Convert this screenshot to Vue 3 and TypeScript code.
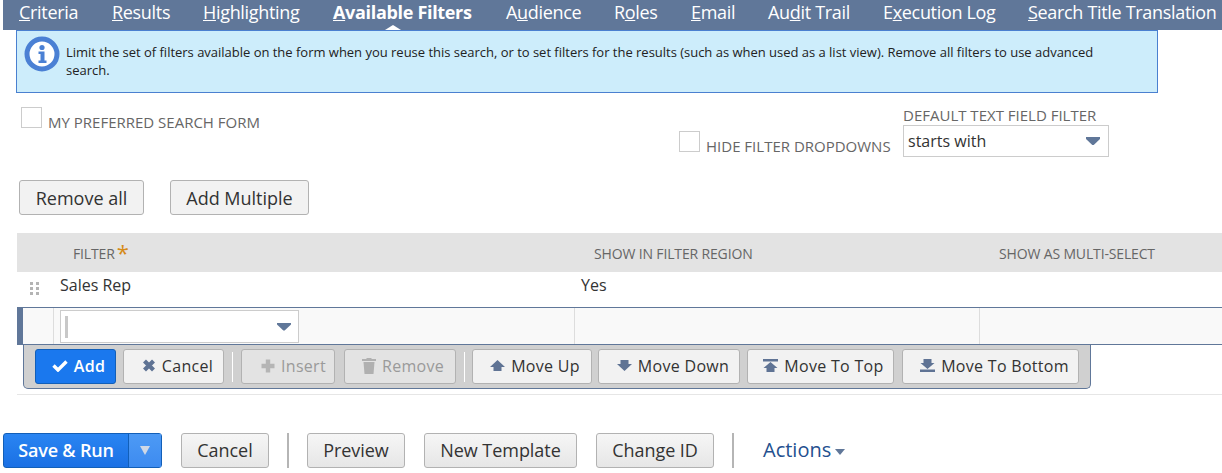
<script setup lang="ts">
const tabs = [
  { pre: '', key: 'C', post: 'riteria', w: 93 },
  { pre: '', key: 'R', post: 'esults', w: 91 },
  { pre: '', key: 'H', post: 'ighlighting', w: 130 },
  { pre: '', key: 'A', post: 'vailable Filters', w: 173, active: true },
  { pre: 'A', key: 'u', post: 'dience', w: 108 },
  { pre: 'R', key: 'o', post: 'les', w: 77 },
  { pre: '', key: 'E', post: 'mail', w: 77 },
  { pre: 'Au', key: 'd', post: 'it Trail', w: 115 },
  { pre: 'E', key: 'x', post: 'ecution Log', w: 145 },
  { pre: '', key: 'S', post: 'earch Title Translation', w: 195 },
]
</script>

<template>
  <div class="page">
    <nav class="tabs">
      <a v-for="t in tabs" :key="t.key + t.post" class="tab" :class="{ active: t.active }" :style="{ width: t.w + 'px' }">{{ t.pre }}<u>{{ t.key }}</u>{{ t.post }}</a>
    </nav>

    <div class="banner">
      <svg class="info" width="36" height="36" viewBox="0 0 36 36">
        <circle cx="18" cy="18" r="15" fill="#fff" stroke="#4a80d4" stroke-width="5" />
        <circle cx="18" cy="11.5" r="2.6" fill="#4a80d4" />
        <path d="M14.5 15.5h6v9h2v2.5h-8v-2.5h2v-6.500h-2z" fill="#4a80d4" />
      </svg>
      <p>Limit the set of filters available on the form when you reuse this search, or to set filters for the results (such as when used as a list view). Remove all filters to use advanced search.</p>
    </div>

    <div class="options">
      <label class="check first"><span class="box"></span><span class="lbl">MY PREFERRED SEARCH FORM</span></label>
      <label class="check second"><span class="box"></span><span class="lbl">HIDE FILTER DROPDOWNS</span></label>
      <div class="deflt">
        <div class="lbl">DEFAULT TEXT FIELD FILTER</div>
        <div class="select"><span>starts with</span><i class="caret"></i></div>
      </div>
    </div>

    <div class="top-btns">
      <button class="btn big w-remove">Remove all</button>
      <button class="btn big w-multiple">Add Multiple</button>
    </div>

    <div class="grid">
      <div class="row head">
        <div class="c0"></div>
        <div class="c1 th">FILTER<span class="star">*</span></div>
        <div class="c2 th">SHOW IN FILTER REGION</div>
        <div class="c3 th">SHOW AS MULTI-SELECT</div>
      </div>
      <div class="row data">
        <div class="c0">
          <svg width="10" height="14" viewBox="0 0 10 14" fill="#b4b4b4"><rect x="0" y="0" width="3" height="3" /><rect x="6" y="0" width="3" height="3" /><rect x="0" y="5" width="3" height="3" /><rect x="6" y="5" width="3" height="3" /><rect x="0" y="10" width="3" height="3" /><rect x="6" y="10" width="3" height="3" /></svg>
        </div>
        <div class="c1 td">Sales Rep</div>
        <div class="c2 td">Yes</div>
        <div class="c3"></div>
      </div>
      <div class="row edit">
        <div class="c0 cell"></div>
        <div class="c1 cell">
          <div class="combo"><span class="cursor"></span><i class="caret"></i></div>
        </div>
        <div class="c2 cell"></div>
        <div class="c3"></div>
      </div>
      <div class="toolbar">
        <button class="btn tool primary w-add">
          <svg width="16" height="13" viewBox="0 0 16 13"><path d="M1.500 6.500l4.500 4.500L14.500 2.500" fill="none" stroke="#fff" stroke-width="3.400" /></svg>Add
        </button>
        <button class="btn tool w-cancel">
          <svg width="14" height="13" viewBox="0 0 14 13"><path d="M2.500 2l9 9M11.500 2l-9 9" stroke="#5f7394" stroke-width="4.200" /></svg>Cancel
        </button>
        <span class="sep"></span>
        <button class="btn tool off w-insert">
          <svg width="14" height="14" viewBox="0 0 14 14"><path d="M7 0.500v13M0.500 7h13" stroke="#b5b5b5" stroke-width="4.400" /></svg>Insert
        </button>
        <button class="btn tool off w-remove-row">
          <svg width="14" height="16" viewBox="0 0 14 16" fill="#b0b0b0"><rect x="0" y="1" width="14" height="2" /><rect x="4.500" y="0" width="5" height="2" /><path d="M1.500 4h11l-1 12h-9z" /></svg>Remove
        </button>
        <span class="sep"></span>
        <button class="btn tool w-up">
          <svg width="15" height="11" viewBox="0 0 15 11" fill="#5f7394"><path d="M7.500 0L15 7h-3.500v4h-8V7H0z" /></svg>Move Up
        </button>
        <button class="btn tool w-down">
          <svg width="15" height="11" viewBox="0 0 15 11" fill="#5f7394"><path d="M3.500 0h8v4H15l-7.500 7L0 4h3.500z" /></svg>Move Down
        </button>
        <button class="btn tool w-top">
          <svg width="15" height="13" viewBox="0 0 15 13" fill="#5f7394"><rect x="0" y="0" width="15" height="2.500" /><path d="M7.500 3l7 6h-3v4h-8V9h-3z" /></svg>Move To Top
        </button>
        <button class="btn tool w-bottom">
          <svg width="15" height="13" viewBox="0 0 15 13" fill="#5f7394"><path d="M3.500 0h8v4h3l-7 6-7-6h3z" /><rect x="0" y="10.500" width="15" height="2.500" /></svg>Move To Bottom
        </button>
      </div>
    </div>

    <div class="bottom">
      <div class="split">
        <span class="split-main">Save &amp; Run</span>
        <span class="split-arrow"><i></i></span>
      </div>
      <button class="btn big grad w-c">Cancel</button>
      <span class="vsep"></span>
      <button class="btn big grad w-p">Preview</button>
      <button class="btn big grad w-n">New Template</button>
      <button class="btn big grad w-i">Change ID</button>
      <span class="vsep"></span>
      <a class="actions">Actions<i></i></a>
    </div>
  </div>
</template>

<style scoped>
.page {
  width: 1222px;
  height: 473px;
  overflow: hidden;
  font-family: "Open Sans", "Noto Sans", sans-serif;
  color: #333;
  background: #fff;
}
.tabs {
  display: flex;
  height: 30px;
  margin-left: 3px;
  padding-left: 16px;
  background: #607799;
  white-space: nowrap;
}
.tab {
  flex: none;
  position: relative;
  font-size: 18px;
  letter-spacing: -0.32px;
  line-height: 25px;
  color: #fff;
}
.tab.active {
  font-weight: 700;
}
.tab.active::after {
  content: "";
  position: absolute;
  left: 52px;
  bottom: 0;
  border: 8px solid transparent;
  border-top: 0;
  border-bottom: 5px solid #fff;
}
.banner {
  box-sizing: border-box;
  display: flex;
  width: 1142px;
  height: 63px;
  margin-left: 16px;
  padding: 5px 40px 0 7px;
  background: #cdedfb;
  border: 1px solid #4a80d0;
}
.info {
  flex: none;
}
.banner p {
  margin: 7px 0 0 6px;
  font-size: 13px;
  letter-spacing: -0.015px;
  line-height: 18px;
  color: #222;
}
.options {
  display: flex;
  height: 87px;
}
.check {
  display: flex;
  flex: none;
}
.first {
  width: 658px;
  margin-left: 21px;
  padding-top: 14px;
}
.second {
  width: 224px;
  padding-top: 38px;
}
.box {
  box-sizing: border-box;
  flex: none;
  width: 21px;
  height: 21px;
  border: 1px solid #ccc;
  background: #fff;
}
.lbl {
  font-size: 15px;
  line-height: 19px;
  color: #666;
  white-space: nowrap;
}
.check .lbl {
  margin: 6px 0 0 6px;
}
.deflt {
  padding-top: 13px;
}
.select {
  box-sizing: border-box;
  display: flex;
  align-items: center;
  justify-content: space-between;
  width: 206px;
  height: 32px;
  padding: 0 8px 0 4px;
  border: 1px solid #ccc;
  font-size: 16px;
}
.caret {
  display: block;
  width: 14px;
  height: 8px;
  background: #607799;
  clip-path: polygon(0 0, 100% 0, 100% 25%, 55% 100%, 45% 100%, 0 25%);
}
.top-btns {
  display: flex;
  gap: 26px;
  margin-left: 19px;
}
.btn {
  box-sizing: border-box;
  display: inline-flex;
  align-items: center;
  justify-content: center;
  flex: none;
  border: 1px solid #b2b2b2;
  border-radius: 3px;
  background: #f2f2f2;
  font-family: inherit;
  color: #333;
  white-space: nowrap;
}
.big {
  height: 35px;
  padding: 0;
  font-size: 18px;
  font-weight: 400;
}
.w-remove { width: 125px; }
.w-multiple { width: 139px; }
.grid {
  width: 1205px;
  margin: 18px 0 0 17px;
  padding-bottom: 5px;
  border-bottom: 1px solid #e6e6e6;
}
.row {
  display: flex;
}
.c0 {
  box-sizing: border-box;
  flex: none;
  width: 36px;
  display: flex;
  justify-content: center;
}
.c1 {
  box-sizing: border-box;
  flex: none;
  width: 521px;
  padding-left: 7px;
}
.c2 {
  box-sizing: border-box;
  flex: none;
  width: 405px;
  padding-left: 7px;
}
.c3 {
  flex: 1;
  padding-left: 20px;
}
.head {
  height: 39px;
  background: #e3e3e3;
}
.th {
  padding-top: 11px;
  font-size: 14px;
  letter-spacing: -0.15px;
  line-height: 19px;
  color: #666;
}
.head .c1 {
  padding-left: 20px;
}
.head .c2 {
  padding-left: 20px;
}
.star {
  position: relative;
  top: 2px;
  margin-left: 2px;
  font-size: 22px;
  line-height: 10px;
  color: #d58a17;
}
.data {
  height: 35px;
}
.data .c0 {
  padding-top: 10px;
}
.td {
  padding-top: 2px;
  font-size: 16px;
  line-height: 22px;
}
.edit {
  box-sizing: border-box;
  height: 38px;
  background: #f9f9f9;
  border-top: 1px solid #607799;
  border-bottom: 1px solid #607799;
  border-left: 6px solid #607799;
}
.edit .c0 {
  width: 31px;
}
.edit .c1 {
  padding-left: 6px;
}
.cell {
  border-right: 1px solid #ddd;
}
.combo {
  box-sizing: border-box;
  display: flex;
  align-items: center;
  justify-content: space-between;
  width: 239px;
  height: 33px;
  margin-top: 2px;
  padding: 0 7px 0 4px;
  background: #fff;
  border: 1px solid #ccc;
}
.cursor {
  width: 3px;
  height: 22px;
  background: #c8c8c8;
}
.toolbar {
  box-sizing: border-box;
  display: flex;
  align-items: flex-start;
  gap: 7px;
  width: 1068px;
  height: 44px;
  margin-left: 6px;
  padding: 4px 0 0 11px;
  background: #d0d0d0;
  border: 1px solid #607799;
  border-top: 0;
  border-radius: 0 0 5px 5px;
}
.tool {
  gap: 6px;
  height: 35px;
  padding: 0 0 2px 6px;
  font-size: 16px;
  letter-spacing: 0.3px;
}
.w-add { width: 81px; }
.w-cancel { width: 101px; padding-left: 8px; }
.w-insert { width: 94px; padding-left: 11px; }
.w-remove-row { width: 112px; margin-left: 2px; }
.w-up { width: 120px; margin-left: -1px; }
.w-down { width: 142px; margin-left: -1px; padding-left: 8px; }
.w-top { width: 147px; }
.w-bottom { width: 177px; margin-left: 1px; padding-left: 8px; }
.primary {
  background: #1a78ee;
  border-color: #125fb8;
  color: #fff;
  font-weight: 600;
}
.off {
  background: #e3e3e3;
  color: #9a9a9a;
}
.sep {
  flex: none;
  width: 1px;
  height: 30px;
  margin: 3px 1px 0;
  background: #fff;
}
.bottom {
  display: flex;
  align-items: center;
  margin: 38px 0 0 3px;
}
.split {
  display: flex;
  flex: none;
  height: 35px;
  width: 159px;
  border: 1px solid #125fb8;
  border-radius: 3px;
  box-sizing: border-box;
  color: #fff;
  font-size: 18px;
  font-weight: 600;
  letter-spacing: -0.2px;
  background: linear-gradient(#2a85f2, #1a70e4);
}
.split-main {
  flex: 1;
  line-height: 32px;
  text-align: center;
  border-right: 1px solid #125fb8;
}
.split-arrow {
  flex: none;
  width: 32px;
  display: flex;
  align-items: center;
  justify-content: center;
  background: linear-gradient(#4d9af5, #3d8bf0);
}
.split-arrow i {
  width: 0;
  height: 0;
  border-left: 5px solid transparent;
  border-right: 5px solid transparent;
  border-top: 9px solid #cfd8e6;
}
.grad {
  padding-bottom: 2px;
  background: linear-gradient(#f6f6f6, #e6e6e6);
  margin-left: 19px;
  letter-spacing: -0.05px;
}
.w-c { width: 88px; }
.w-p { width: 98px; margin-left: 18px; }
.w-n { width: 153px; }
.w-i { width: 118px; }
.vsep {
  flex: none;
  width: 2px;
  height: 35px;
  margin-left: 18px;
  background: #b5b5b5;
}
.actions {
  margin: -2px 0 0 29px;
  font-size: 20px;
  color: #24508f;
}
.actions i {
  display: inline-block;
  width: 0;
  height: 0;
  margin-left: 4px;
  vertical-align: 2px;
  border-left: 5px solid transparent;
  border-right: 5px solid transparent;
  border-top: 6px solid #607799;
}
</style>
